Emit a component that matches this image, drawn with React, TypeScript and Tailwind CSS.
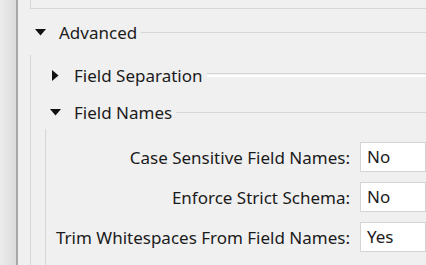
const rows = [
  { label: "Case Sensitive Field Names:", value: "No" },
  { label: "Enforce Strict Schema:", value: "No" },
  { label: "Trim Whitespaces From Field Names:", value: "Yes" },
]

function Caret({ open }: { open: boolean }) {
  return open ? (
    <svg width="11" height="7" viewBox="0 0 11 7" className="shrink-0">
      <path d="M0 0H11L5.5 6.5Z" fill="#111" />
    </svg>
  ) : (
    <svg width="7" height="11" viewBox="0 0 7 11" className="shrink-0">
      <path d="M0 0V11L6.5 5.5Z" fill="#111" />
    </svg>
  )
}

export default function App() {
  return (
    <div
      className="flex w-[426px] h-[265px] overflow-hidden bg-[#f0f0f0] text-[17px] text-[#1b1b1b]"
      style={{ fontFamily: '"Noto Sans", "Open Sans", sans-serif' }}
    >
      <div className="w-[16px] shrink-0 bg-gradient-to-r from-[#ececec] to-[#dcdcdc]" />
      <div className="w-[2px] shrink-0 bg-[#a8a8a8]" />
      <div className="flex-1 flex flex-col">
        {/* end of previous group */}
        <div className="ml-[12px] h-[9px] border-l border-b border-[#d6d6d6]" />

        {/* Advanced header */}
        <div className="flex items-center h-[46px] ml-[17px]">
          <Caret open />
          <span className="ml-[13px] leading-none">Advanced</span>
          <div className="flex-1 ml-[4px] border-t border-[#d6d6d6]" />
        </div>

        <div className="flex-1 ml-[12px] border-l border-[#d6d6d6] flex flex-col">
          {/* Field Separation */}
          <div className="flex items-center h-[40px] ml-[21px]">
            <Caret open={false} />
            <span className="ml-[15px] leading-none">Field Separation</span>
            <div className="flex-1 ml-[4px] h-[4px] border-t border-b-2 border-t-[#d6d6d6] border-b-white" />
          </div>

          {/* Field Names */}
          <div className="flex items-center h-[34px] ml-[19px]">
            <Caret open />
            <span className="ml-[13px] leading-none">Field Names</span>
            <div className="flex-1 ml-[4px] border-t border-[#d6d6d6]" />
          </div>

          <div className="flex-1 ml-[14px] border-l border-[#d6d6d6] flex flex-col gap-[10px] pt-[13px]">
            {rows.map((r) => (
              <div key={r.label} className="flex items-center">
                <span className="w-[304px] shrink-0 text-right leading-none whitespace-nowrap">{r.label}</span>
                <div className="ml-[10px] flex-1 h-[30px] flex items-center pl-[6px] bg-white border border-[#d4d4d4]">
                  {r.value}
                </div>
              </div>
            ))}
          </div>
        </div>
      </div>
    </div>
  )
}
